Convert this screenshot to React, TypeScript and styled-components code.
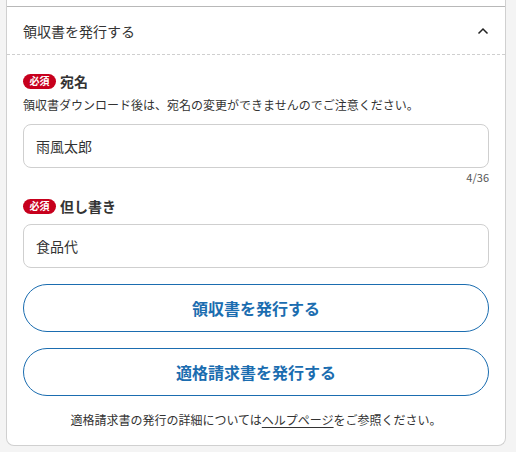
import React from "react";
import styled, { createGlobalStyle } from "styled-components";

const Global = createGlobalStyle`
  html, body { margin: 0; padding: 0; background: #f4f4f4; }
  body { font-family: "Noto Sans CJK JP", "Noto Sans", sans-serif; color: #333; }
  * { box-sizing: border-box; }
`;

const Page = styled.div`
  padding: 0 10px 6px 6px;
  height: 452px;
  overflow: hidden;
`;

const Card = styled.section`
  background: #fff;
  border: 1px solid #d0d0d0;
  border-top: none;
  border-radius: 0 0 8px 8px;
  width: 500px;
`;

const PrevTail = styled.div`
  height: 7px;
  border-bottom: 1px solid #b8b8b8;
`;

const Header = styled.div`
  height: 48px;
  padding: 0 16px;
  display: flex;
  align-items: center;
  justify-content: space-between;
  border-bottom: 1px dashed #cfcfcf;
`;

const HeaderTitle = styled.h2`
  margin: 0;
  font-size: 14px;
  font-weight: 400;
  color: #333;
  line-height: 1;
`;

const Body = styled.div`
  padding: 16px 16px 18px;
  display: flex;
  flex-direction: column;
`;

const LabelRow = styled.div`
  display: flex;
  align-items: center;
  gap: 4px;
  height: 20px;
`;

const Badge = styled.span`
  display: inline-flex;
  align-items: center;
  justify-content: center;
  width: 33px;
  height: 15px;
  border-radius: 8px;
  background: #c7001d;
  color: #fff;
  font-size: 10px;
  font-weight: 700;
  line-height: 1;
`;

const Label = styled.span`
  font-size: 14px;
  font-weight: 700;
  color: #333;
`;

const Note = styled.p`
  margin: 7px 0 0;
  font-size: 12px;
  line-height: 14px;
  color: #333;
`;

const Input = styled.div<{ $mt: number }>`
  margin-top: ${(p) => p.$mt}px;
  height: 44px;
  border: 1px solid #cfcfcf;
  border-radius: 8px;
  padding: 0 12px;
  display: flex;
  align-items: center;
  font-size: 14px;
  color: #333;
`;

const Counter = styled.div`
  margin-top: 2px;
  text-align: right;
  font-size: 11px;
  line-height: 14px;
  color: #555;
`;

const Spacer = styled.div<{ $h: number }>`
  height: ${(p) => p.$h}px;
`;

const Button = styled.button<{ $mt: number }>`
  margin-top: ${(p) => p.$mt}px;
  height: 48px;
  border: 1px solid #1b6db0;
  border-radius: 24px;
  background: #fff;
  color: #1b6db0;
  font-family: inherit;
  font-size: 16px;
  font-weight: 700;
  display: flex;
  align-items: center;
  justify-content: center;
`;

const Footer = styled.p`
  margin: 17px 0 0;
  text-align: center;
  font-size: 12px;
  line-height: 14px;
  color: #333;
`;

const HelpLink = styled.a`
  color: #333;
  text-decoration: underline;
  text-underline-offset: 2px;
`;

export default function App() {
  return (
    <>
      <Global />
      <Page>
        <Card>
          <PrevTail />
          <Header>
            <HeaderTitle>領収書を発行する</HeaderTitle>
            <svg width="12" height="8" viewBox="0 0 12 8" fill="none">
              <path d="M1.5 6.5 L6 2 L10.5 6.5" stroke="#222" strokeWidth="1.5" />
            </svg>
          </Header>
          <Body>
            <LabelRow>
              <Badge>必須</Badge>
              <Label>宛名</Label>
            </LabelRow>
            <Note>領収書ダウンロード後は、宛名の変更ができませんのでご注意ください。</Note>
            <Input $mt={12}>雨風太郎</Input>
            <Counter>4/36</Counter>
            <Spacer $h={12} />
            <LabelRow>
              <Badge>必須</Badge>
              <Label>但し書き</Label>
            </LabelRow>
            <Input $mt={8}>食品代</Input>
            <Button $mt={16}>領収書を発行する</Button>
            <Button $mt={16}>適格請求書を発行する</Button>
            <Footer>
              適格請求書の発行の詳細については<HelpLink>ヘルプページ</HelpLink>をご参照ください。
            </Footer>
          </Body>
        </Card>
      </Page>
    </>
  );
}
